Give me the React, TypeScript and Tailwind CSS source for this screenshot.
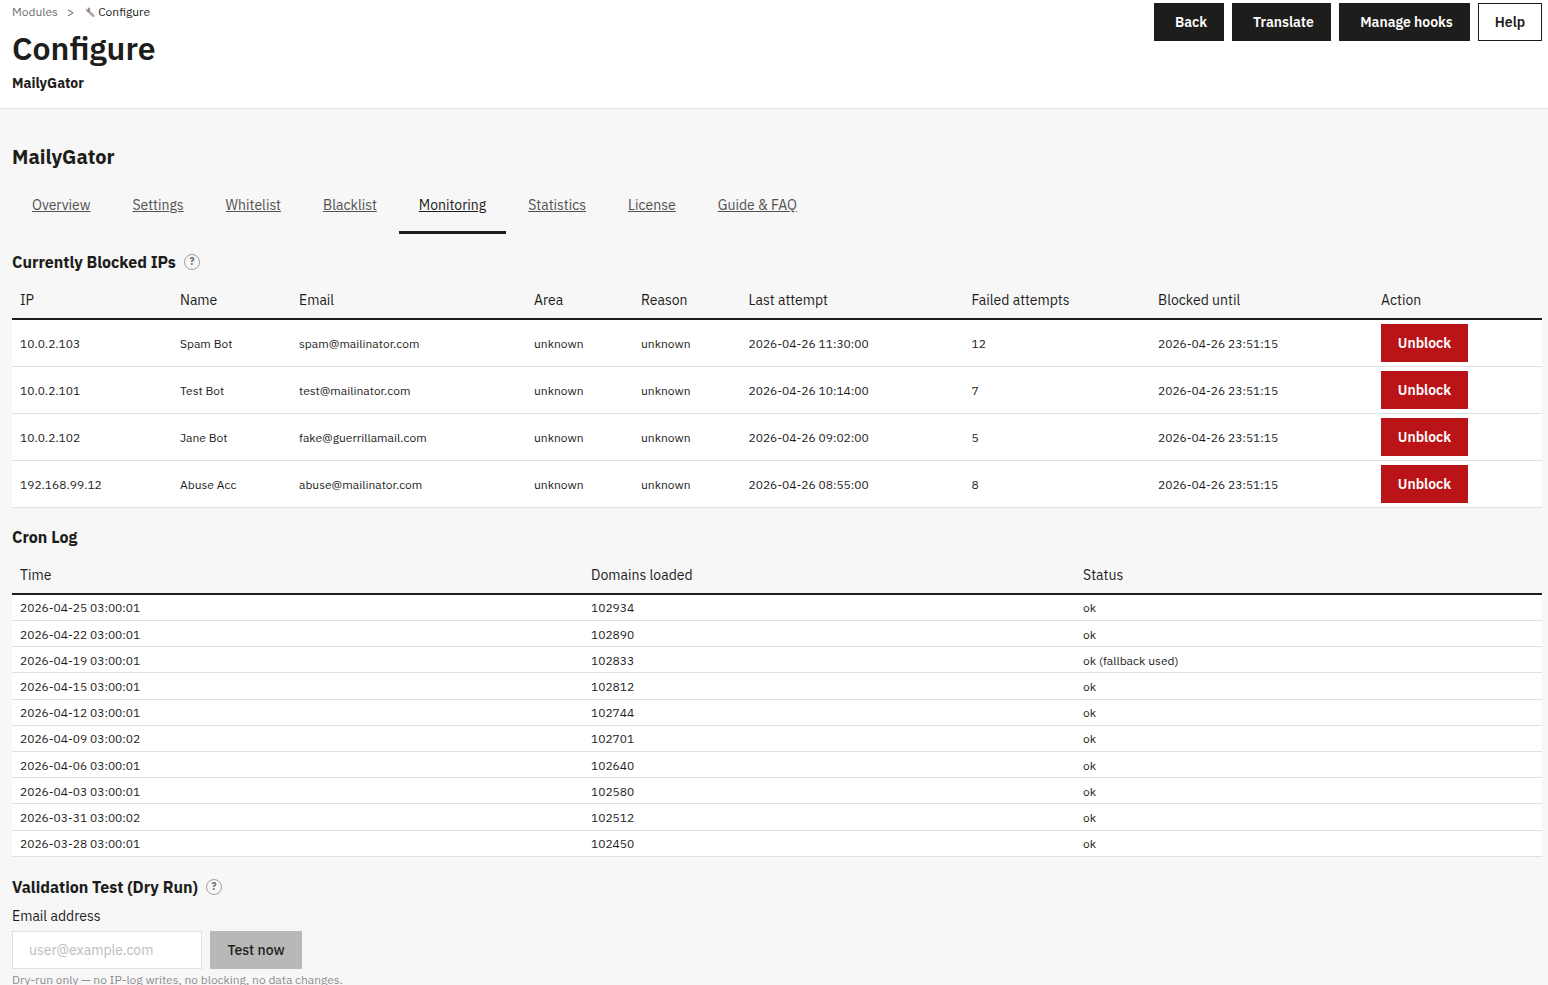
const font = "font-['IBM_Plex_Sans','Noto_Sans',sans-serif]";

const tabs = ["Overview", "Settings", "Whitelist", "Blacklist", "Monitoring", "Statistics", "License", "Guide & FAQ"];

const blocked = [
  ["10.0.2.103", "Spam Bot", "spam@mailinator.com", "2026-04-26 11:30:00", "12"],
  ["10.0.2.101", "Test Bot", "test@mailinator.com", "2026-04-26 10:14:00", "7"],
  ["10.0.2.102", "Jane Bot", "fake@guerrillamail.com", "2026-04-26 09:02:00", "5"],
  ["192.168.99.12", "Abuse Acc", "abuse@mailinator.com", "2026-04-26 08:55:00", "8"],
];

const cron = [
  ["2026-04-25 03:00:01", "102934", "ok"],
  ["2026-04-22 03:00:01", "102890", "ok"],
  ["2026-04-19 03:00:01", "102833", "ok (fallback used)"],
  ["2026-04-15 03:00:01", "102812", "ok"],
  ["2026-04-12 03:00:01", "102744", "ok"],
  ["2026-04-09 03:00:02", "102701", "ok"],
  ["2026-04-06 03:00:01", "102640", "ok"],
  ["2026-04-03 03:00:01", "102580", "ok"],
  ["2026-03-31 03:00:02", "102512", "ok"],
  ["2026-03-28 03:00:01", "102450", "ok"],
];

function HelpDot() {
  return (
    <span className="ml-2 inline-flex h-4 w-4 items-center justify-center rounded-full border-[1.5px] border-[#a0a0a0] text-[10px] font-bold leading-none text-[#6f6f6f]">
      ?
    </span>
  );
}

function HeaderCell({ label, width }: { label: string; width: string }) {
  return <th className={`${width} px-2 pb-[2px] text-left text-sm font-normal`}>{label}</th>;
}

export default function App() {
  return (
    <div className={`${font} h-[985px] overflow-hidden bg-[#f7f7f7] text-[#1d1d1b]`}>
      <header className="flex h-[109px] justify-between border-b border-[#e0e0e0] bg-white pl-3 pr-1.5 pt-[3px]">
        <div>
          <div className="flex h-[18px] items-center text-xs">
            <span className="text-[#6f6f6f]">Modules</span>
            <span className="ml-[9px] text-[#525252]">&gt;</span>
            <svg className="ml-[11px] mr-[3px] h-[10px] w-[10px]" viewBox="0 0 10 10" fill="none">
              <path d="M3.4 4.2 L8.4 8.8" stroke="#b39aa0" strokeWidth="2.4" strokeLinecap="round" />
              <path d="M1 1.6 L2.6 3 L3.4 2.4 L2.4 .6 C4 .2 5.6 1.4 5.2 3.2 L4 5 C2.4 5.4 .6 3.6 1 1.6 Z" fill="#868686" />
            </svg>
            <span>Configure</span>
          </div>
          <h1 className="mt-[7px] text-[32px] font-semibold leading-10">Configure</h1>
          <div className="mt-[5px] text-sm font-bold leading-5">MailyGator</div>
        </div>
        <div className="flex h-[38px] gap-2 text-sm font-semibold">
          <button className="w-[70px] bg-[#1d1d1b] pl-1 text-white">Back</button>
          <button className="w-[99px] bg-[#1d1d1b] pl-1 text-white">Translate</button>
          <button className="w-[131px] bg-[#1d1d1b] pl-1 text-white">Manage hooks</button>
          <button className="w-[64px] border border-[#1d1d1b] bg-white">Help</button>
        </div>
      </header>

      <main className="px-3 pr-1.5">
        <h2 className="mt-[36px] text-xl font-bold leading-6">MailyGator</h2>

        <nav className="mt-[17px] flex h-[48px] text-sm">
          {tabs.map((tab) => (
            <a
              key={tab}
              className={
                tab === "Monitoring"
                  ? "mr-[2px] flex items-center border-b-[3px] border-[#1d1d1b] px-5 pb-[7px] underline"
                  : "mr-[2px] flex items-center border-b-[3px] border-transparent px-5 pb-[7px] text-[#525252] underline"
              }
            >
              {tab}
            </a>
          ))}
        </nav>

        <h3 className="mt-[18px] flex h-5 items-center text-base font-bold">
          Currently Blocked IPs <HelpDot />
        </h3>

        <table className="mt-[11px] w-full table-fixed border-collapse">
          <thead>
            <tr className="h-[36px] border-b-2 border-[#1d1d1b]">
              <HeaderCell label="IP" width="w-[160px]" />
              <HeaderCell label="Name" width="w-[119px]" />
              <HeaderCell label="Email" width="w-[235px]" />
              <HeaderCell label="Area" width="w-[107px]" />
              <HeaderCell label="Reason" width="w-[107.5px]" />
              <HeaderCell label="Last attempt" width="w-[223px]" />
              <HeaderCell label="Failed attempts" width="w-[186.5px]" />
              <HeaderCell label="Blocked until" width="w-[223px]" />
              <HeaderCell label="Action" width="w-[169px]" />
            </tr>
          </thead>
          <tbody className="bg-white text-xs">
            {blocked.map((row) => (
              <tr key={row[0]} className="h-[47px] border-b border-[#e0e0e0]">
                <td className="px-2 pt-[2px]">{row[0]}</td>
                <td className="px-2 pt-[2px]">{row[1]}</td>
                <td className="px-2 pt-[2px]">{row[2]}</td>
                <td className="px-2 pt-[2px]">unknown</td>
                <td className="px-2 pt-[2px]">unknown</td>
                <td className="px-2 pt-[2px]">{row[3]}</td>
                <td className="px-2 pt-[2px]">{row[4]}</td>
                <td className="px-2 pt-[2px]">2026-04-26 23:51:15</td>
                <td className="px-2">
                  <button className="h-[38px] w-[87px] bg-[#ba1419] text-sm font-semibold text-white">Unblock</button>
                </td>
              </tr>
            ))}
          </tbody>
        </table>

        <h3 className="mt-[19px] h-5 text-base font-bold leading-5">Cron Log</h3>

        <table className="mt-[11px] w-full table-fixed border-collapse">
          <thead>
            <tr className="h-[36px] border-b-2 border-[#1d1d1b]">
              <th className="w-[571px] px-2 text-left text-sm font-normal">Time</th>
              <th className="w-[492px] px-2 text-left text-sm font-normal">Domains loaded</th>
              <th className="w-[467px] px-2 text-left text-sm font-normal">Status</th>
            </tr>
          </thead>
          <tbody className="bg-white text-xs">
            {cron.map((row, i) => (
              <tr key={row[0]} className={i === 0 ? "h-[27px] border-b border-[#e0e0e0]" : "h-[26.2px] border-b border-[#e0e0e0]"}>
                <td className="px-2 pt-[2px]">{row[0]}</td>
                <td className="px-2 pt-[2px]">{row[1]}</td>
                <td className="px-2 pt-[2px]">{row[2]}</td>
              </tr>
            ))}
          </tbody>
        </table>

        <h3 className="mt-[20px] flex h-5 items-center text-base font-bold">
          Validation Test (Dry Run) <HelpDot />
        </h3>

        <label className="mt-[9px] block text-sm leading-5">Email address</label>
        <div className="mt-[5px] flex gap-2">
          <input
            placeholder="user@example.com"
            className="h-[38px] w-[190px] border border-[#e0e0e0] bg-white px-4 text-sm placeholder:text-[#bdbdbd]"
          />
          <button className="h-[38px] w-[92px] bg-[#b8b8b8] text-sm font-medium">Test now</button>
        </div>
        <p className="mt-[3px] text-xs leading-4 tracking-[-0.03px] text-[#8d8d8d]">Dry-run only — no IP-log writes, no blocking, no data changes.</p>
      </main>
    </div>
  );
}
